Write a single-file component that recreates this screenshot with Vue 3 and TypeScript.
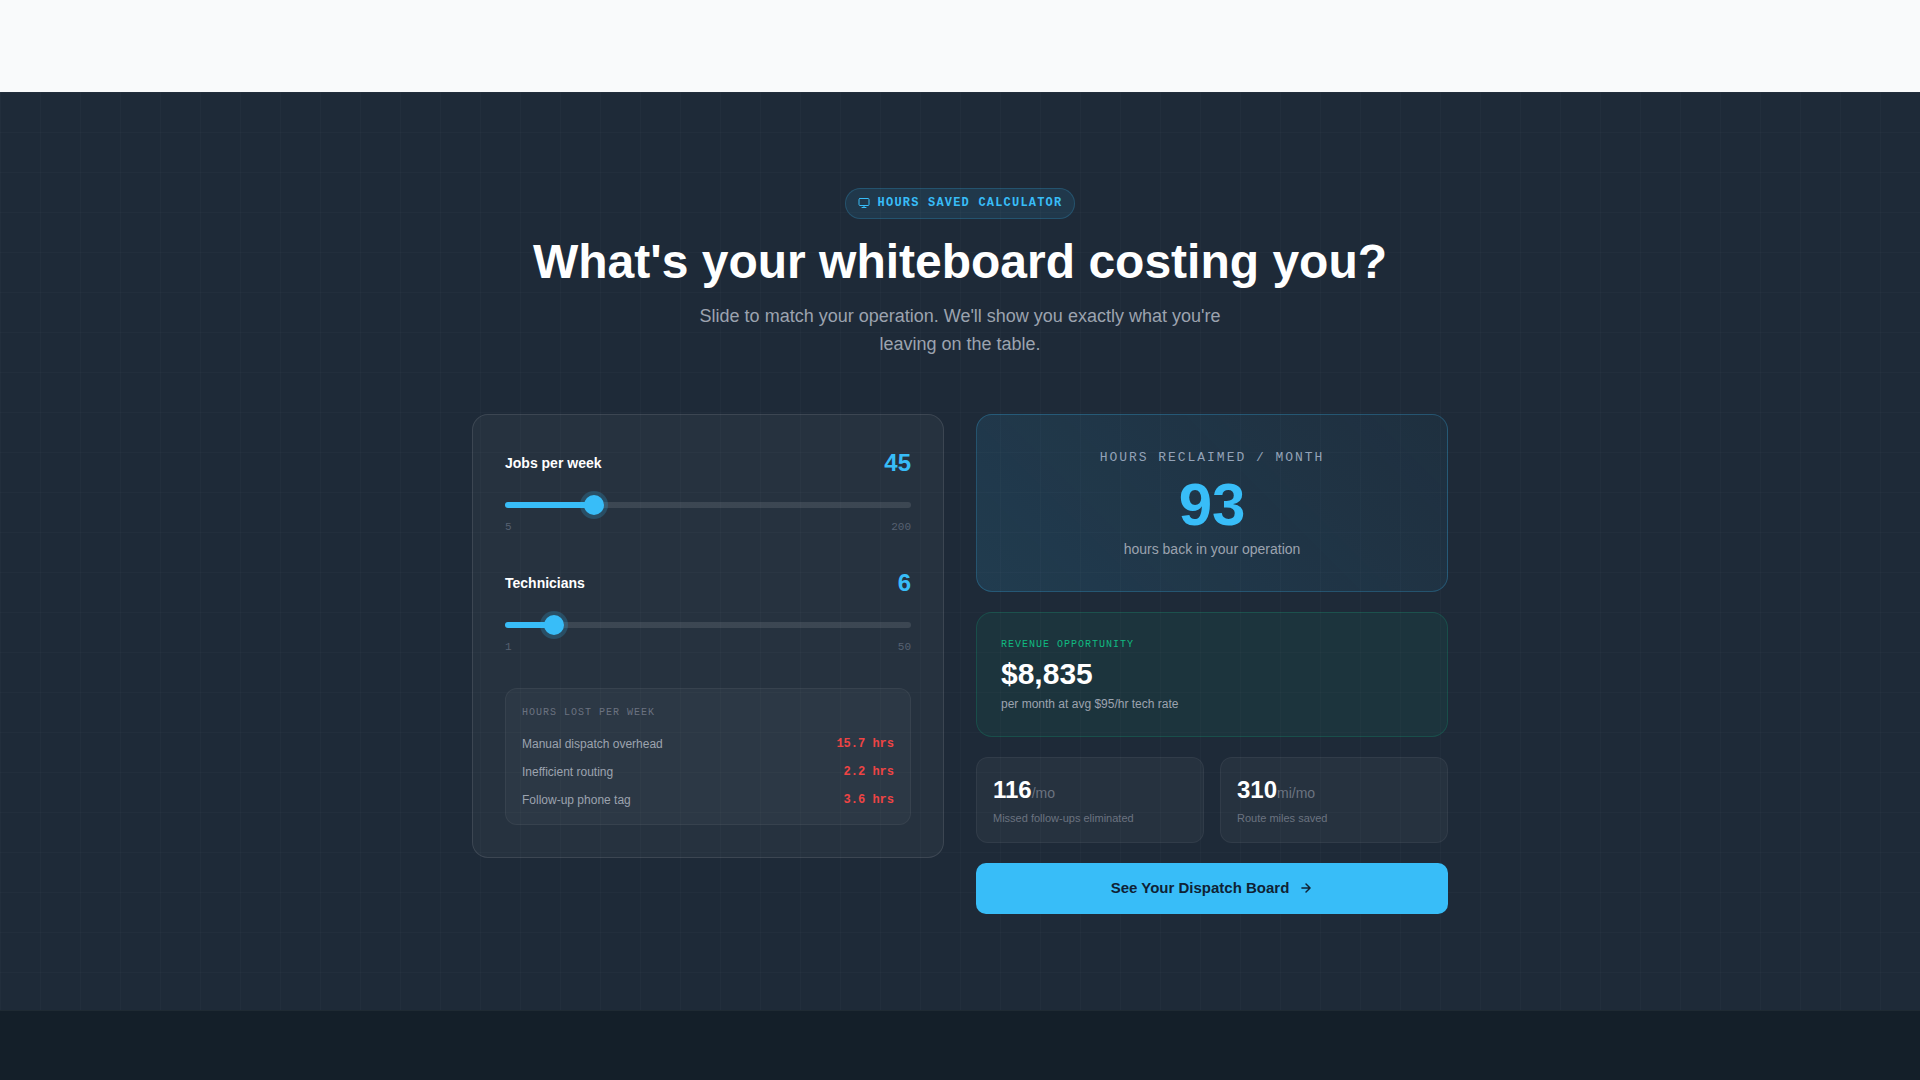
<script setup lang="ts">
import { computed, ref } from 'vue'

const jobs = ref(45)
const techs = ref(6)

const pct = (value: number, min: number, max: number) => ((value - min) / (max - min)) * 100
const fill = (value: number, min: number, max: number) => {
  const p = pct(value, min, max)
  return { background: `linear-gradient(to right, #38bdf8 ${p}%, rgba(255, 255, 255, 0.1) ${p}%)` }
}

const losses = computed(() => [
  { label: 'Manual dispatch overhead', hours: jobs.value * 0.349 },
  { label: 'Inefficient routing', hours: techs.value * 0.36 },
  { label: 'Follow-up phone tag', hours: techs.value * 0.6 },
])

const hoursPerMonth = computed(() =>
  Math.round(losses.value.reduce((sum, l) => sum + l.hours, 0) * 4.33),
)
const revenue = computed(() => (hoursPerMonth.value * 95).toLocaleString('en-US'))
const followUps = computed(() => Math.round(jobs.value * 2.58))
const miles = computed(() => Math.round(techs.value * 51.7))
</script>

<template>
  <div class="page">
    <div class="topbar"></div>

    <section class="calc">
      <div class="inner">
        <header class="head">
          <div class="badge">
            <svg class="badge-icon" viewBox="0 0 24 24" fill="none" stroke="currentColor" stroke-width="2" stroke-linecap="round" stroke-linejoin="round">
              <rect x="2" y="3" width="20" height="14" rx="2" />
              <path d="M8 21h8M12 17v4" />
            </svg>
            <span>HOURS SAVED CALCULATOR</span>
          </div>
          <h2 class="title">What's your whiteboard costing you?</h2>
          <p class="sub">Slide to match your operation. We'll show you exactly what you're leaving on the table.</p>
        </header>

        <div class="columns">
          <div class="inputs">
            <div class="field">
              <div class="field-row">
                <label class="field-label" for="jobs">Jobs per week</label>
                <span class="field-value">{{ jobs }}</span>
              </div>
              <input id="jobs" v-model.number="jobs" class="slider" type="range" min="5" max="200" :style="fill(jobs, 5, 200)" />
              <div class="range-ends"><span>5</span><span>200</span></div>
            </div>

            <div class="field field-last">
              <div class="field-row">
                <label class="field-label" for="techs">Technicians</label>
                <span class="field-value">{{ techs }}</span>
              </div>
              <input id="techs" v-model.number="techs" class="slider" type="range" min="1" max="50" :style="fill(techs, 1, 50)" />
              <div class="range-ends"><span>1</span><span>50</span></div>
            </div>

            <div class="lost">
              <div class="lost-title">HOURS LOST PER WEEK</div>
              <div v-for="item in losses" :key="item.label" class="lost-row">
                <span class="lost-label">{{ item.label }}</span>
                <span class="lost-value">{{ item.hours.toFixed(1) }} hrs</span>
              </div>
            </div>
          </div>

          <div class="results">
            <div class="hero">
              <div class="hero-label">HOURS RECLAIMED / MONTH</div>
              <div class="hero-value">{{ hoursPerMonth }}</div>
              <div class="hero-sub">hours back in your operation</div>
            </div>

            <div class="revenue">
              <div class="revenue-label">REVENUE OPPORTUNITY</div>
              <div class="revenue-value">${{ revenue }}</div>
              <div class="revenue-sub">per month at avg $95/hr tech rate</div>
            </div>

            <div class="stats">
              <div class="stat">
                <div class="stat-value">{{ followUps }}<span class="stat-unit">/mo</span></div>
                <div class="stat-label">Missed follow-ups eliminated</div>
              </div>
              <div class="stat">
                <div class="stat-value">{{ miles }}<span class="stat-unit">mi/mo</span></div>
                <div class="stat-label">Route miles saved</div>
              </div>
            </div>

            <button type="button" class="cta">
              See Your Dispatch Board
              <svg class="cta-icon" viewBox="0 0 24 24" fill="none" stroke="currentColor" stroke-width="2.5" stroke-linecap="round" stroke-linejoin="round">
                <path d="M5 12h14M12 5l7 7-7 7" />
              </svg>
            </button>
          </div>
        </div>
      </div>
    </section>

    <footer class="foot"></footer>
  </div>
</template>

<style>
body {
  background: #141f29;
}
</style>

<style scoped>
.page {
  display: flex;
  flex-direction: column;
  min-height: 1080px;
  font-family: "Liberation Sans", Arial, sans-serif;
}

.topbar {
  height: 92px;
  background: #f9fafb;
}

.calc {
  padding: 96px 0;
  background-color: #1e2a38;
  background-image:
    linear-gradient(rgba(255, 255, 255, 0.02) 1px, transparent 1px),
    linear-gradient(90deg, rgba(255, 255, 255, 0.02) 1px, transparent 1px);
  background-size: 40px 40px;
}

.inner {
  width: 976px;
  margin: 0 auto;
}

.head {
  display: flex;
  flex-direction: column;
  align-items: center;
  margin-bottom: 56px;
  text-align: center;
}

.badge {
  display: flex;
  align-items: center;
  gap: 8px;
  padding: 7px 12px;
  border: 1px solid rgba(56, 189, 248, 0.2);
  border-radius: 999px;
  background: rgba(56, 189, 248, 0.1);
  color: #38bdf8;
  font-family: "Liberation Mono", monospace;
  font-size: 12px;
  font-weight: 700;
  line-height: 15px;
  letter-spacing: 0.1em;
}

.badge-icon {
  width: 12px;
  height: 12px;
  margin-top: -1px;
}

.title {
  margin: 15px 0 13px;
  color: #fff;
  font-size: 48px;
  font-weight: 700;
  line-height: 1.15;
}

.sub {
  max-width: 560px;
  margin: 0;
  color: #9ca3af;
  font-size: 18px;
  line-height: 28px;
}

.columns {
  display: grid;
  grid-template-columns: 1fr 1fr;
  gap: 32px;
  align-items: start;
}

.inputs {
  padding: 32px;
  border: 1px solid rgba(255, 255, 255, 0.1);
  border-radius: 16px;
  background: rgba(255, 255, 255, 0.04);
}

.field {
  margin-bottom: 32px;
}

.field-last {
  margin-bottom: 33px;
}

.field-row {
  display: flex;
  align-items: center;
  justify-content: space-between;
  height: 32px;
}

.field-label {
  color: #fff;
  font-size: 14px;
  font-weight: 700;
}

.field-value {
  color: #38bdf8;
  font-size: 24px;
  font-weight: 700;
}

.slider {
  display: block;
  width: 100%;
  height: 6px;
  margin: 23px 0 11px;
  border-radius: 3px;
  outline: none;
  appearance: none;
  -webkit-appearance: none;
  cursor: pointer;
}

.slider::-webkit-slider-thumb {
  width: 20px;
  height: 20px;
  border-radius: 50%;
  background: #38bdf8;
  box-shadow: 0 0 0 4px rgba(56, 189, 248, 0.2);
  appearance: none;
  -webkit-appearance: none;
}

.range-ends {
  display: flex;
  justify-content: space-between;
  color: #566171;
  font-family: "Liberation Mono", monospace;
  font-size: 11px;
  line-height: 16px;
}

.lost {
  padding: 16px 16px 15px;
  border: 1px solid rgba(255, 255, 255, 0.05);
  border-radius: 12px;
  background: rgba(255, 255, 255, 0.03);
}

.lost-title {
  margin-bottom: 15px;
  color: #6b7280;
  font-family: "Liberation Mono", monospace;
  font-size: 10px;
  line-height: 15px;
  letter-spacing: 0.1em;
}

.lost-row {
  display: flex;
  align-items: center;
  justify-content: space-between;
  height: 18px;
  margin-bottom: 10px;
  font-size: 12px;
}

.lost-row:last-child {
  margin-bottom: 0;
}

.lost-label {
  color: #9ca3af;
}

.lost-value {
  color: #ef4444;
  font-family: "Liberation Mono", monospace;
  font-weight: 700;
}

.results {
  display: flex;
  flex-direction: column;
  gap: 20px;
}

.hero {
  padding: 32px 24px;
  border: 1px solid rgba(56, 189, 248, 0.25);
  border-radius: 16px;
  background: linear-gradient(45deg, rgba(56, 189, 248, 0.12), rgba(56, 189, 248, 0.04));
  text-align: center;
}

.hero-label {
  color: #94a3b8;
  font-family: "Liberation Mono", monospace;
  font-size: 13px;
  line-height: 22px;
  letter-spacing: 0.15em;
}

.hero-value {
  margin: 6px 0 4px;
  color: #38bdf8;
  font-size: 60px;
  font-weight: 700;
  line-height: 60px;
}

.hero-sub {
  color: #9ca3af;
  font-size: 14px;
  line-height: 20px;
}

.revenue {
  padding: 24px;
  border: 1px solid rgba(16, 185, 129, 0.2);
  border-radius: 16px;
  background: rgba(16, 185, 129, 0.07);
}

.revenue-label {
  color: #10b981;
  font-family: "Liberation Mono", monospace;
  font-size: 10px;
  line-height: 15px;
  letter-spacing: 0.1em;
}

.revenue-value {
  margin-top: 4px;
  color: #fff;
  font-size: 30px;
  font-weight: 700;
  line-height: 36px;
}

.revenue-sub {
  margin-top: 4px;
  color: #9ca3af;
  font-size: 12px;
  line-height: 16px;
}

.stats {
  display: grid;
  grid-template-columns: 1fr 1fr;
  gap: 16px;
}

.stat {
  padding: 16px;
  border: 1px solid rgba(255, 255, 255, 0.05);
  border-radius: 12px;
  background: rgba(255, 255, 255, 0.04);
}

.stat-value {
  color: #fff;
  font-size: 24px;
  font-weight: 700;
  line-height: 32px;
}

.stat-unit {
  color: #6b7280;
  font-size: 14px;
  font-weight: 400;
  line-height: 1;
}

.stat-label {
  margin-top: 4px;
  color: #6b7280;
  font-size: 11px;
  line-height: 16px;
}

.cta {
  display: flex;
  align-items: center;
  justify-content: center;
  gap: 8px;
  height: 51px;
  padding: 0 0 2px;
  border: none;
  border-radius: 10px;
  background: #38bdf8;
  color: #0f2235;
  font-family: inherit;
  font-size: 15px;
  font-weight: 700;
  cursor: pointer;
}

.cta-icon {
  width: 14px;
  height: 14px;
  margin-left: 2px;
}

.foot {
  flex: 1;
  border-top: 1px solid rgba(255, 255, 255, 0.05);
  background: #141f29;
}
</style>
